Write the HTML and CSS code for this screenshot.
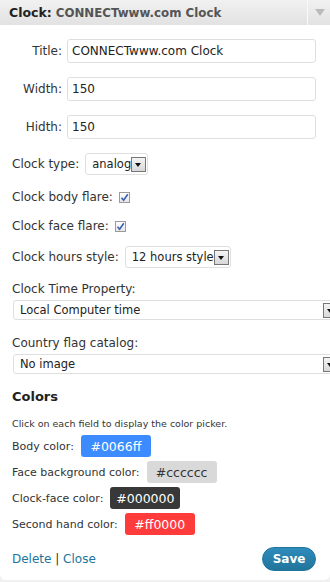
FILE: index.html
```html
<!DOCTYPE html>
<html>

<head>
    <title>Clock Widget</title>
    <meta name="viewport" content="width=device-width, initial-scale=1">
    <link rel="stylesheet" href="styles.css">
</head>

<body>
    <div class="widget">
        <div class="widget-top">
            <div class="widget-title"><b>Clock:</b> <span class="in-title">CONNECTwww.com Clock</span></div>
            <div class="widget-toggle"><span class="toggle-arrow"></span></div>
        </div>

        <div class="widget-inside">
            <div class="field-row">
                <label class="side-label">Title:</label>
                <input class="text-input" type="text" value="CONNECTwww.com Clock">
            </div>
            <div class="field-row">
                <label class="side-label">Width:</label>
                <input class="text-input" type="text" value="150">
            </div>
            <div class="field-row">
                <label class="side-label">Hidth:</label>
                <input class="text-input" type="text" value="150">
            </div>

            <div class="opt-row row-type">
                <span>Clock type:</span>
                <span class="fake-select small-select"><span class="sel-text">analog</span><span class="sel-arrow"></span></span>
            </div>
            <div class="opt-row row-body">
                <span>Clock body flare:</span>
                <span class="check"><svg width="9" height="9" viewBox="0 0 9 9"><path d="M1.5 4.8 L3.6 7.2 L7.8 1.2" fill="none" stroke="#3a5fb0" stroke-width="1.6"/></svg></span>
            </div>
            <div class="opt-row row-face">
                <span>Clock face flare:</span>
                <span class="check"><svg width="9" height="9" viewBox="0 0 9 9"><path d="M1.5 4.8 L3.6 7.2 L7.8 1.2" fill="none" stroke="#3a5fb0" stroke-width="1.6"/></svg></span>
            </div>
            <div class="opt-row row-hours">
                <span>Clock hours style:</span>
                <span class="fake-select small-select"><span class="sel-text">12 hours style</span><span class="sel-arrow"></span></span>
            </div>

            <div class="block-label label-time">Clock Time Property:</div>
            <div class="fake-select wide-select"><span class="sel-text">Local Computer time</span><span class="sel-arrow"></span></div>

            <div class="block-label label-flag">Country flag catalog:</div>
            <div class="fake-select wide-select"><span class="sel-text">No image</span><span class="sel-arrow"></span></div>

            <h3 class="colors-title">Colors</h3>
            <p class="colors-note">Click on each field to display the color picker.</p>

            <div class="color-row">
                <span>Body color:</span>
                <span class="swatch swatch-blue">#0066ff</span>
            </div>
            <div class="color-row">
                <span>Face background color:</span>
                <span class="swatch swatch-grey">#cccccc</span>
            </div>
            <div class="color-row">
                <span>Clock-face color:</span>
                <span class="swatch swatch-black">#000000</span>
            </div>
            <div class="color-row">
                <span>Second hand color:</span>
                <span class="swatch swatch-red">#ff0000</span>
            </div>

            <div class="widget-control">
                <div class="control-links"><a href="#">Delete</a> | <a href="#">Close</a></div>
                <button class="save-btn" type="button">Save</button>
            </div>
        </div>
    </div>
</body>

</html>
```

FILE: styles.css
```css
body {
    margin: 0;
    padding: 0;
    background: #f1f1f1;
    font-family: "DejaVu Sans", Verdana, sans-serif;
    font-size: 12px;
    color: #333;
    overflow: hidden;
}

.widget {
    width: 330px;
    height: 580px;
    background: #fff;
    border-radius: 0 0 6px 6px;
    overflow: visible;
}

/* header bar */
.widget-top {
    height: 25px;
    display: flex;
    align-items: center;
    background: linear-gradient(to bottom, #f1f1f1, #e2e2e2);
}

.widget-title {
    flex: 1;
    padding-left: 9px;
    font-size: 12.5px;
    color: #222;
    white-space: nowrap;
}

.widget-title b {
    font-weight: bold;
}

.in-title {
    font-size: 11.8px;
    font-weight: bold;
    color: #555;
}

.widget-toggle {
    width: 22px;
    height: 25px;
    border-left: 1px solid #f9f9f9;
    display: flex;
    justify-content: center;
    align-items: center;
}

.toggle-arrow {
    width: 0;
    height: 0;
    border-left: 5px solid transparent;
    border-right: 5px solid transparent;
    border-top: 7px solid #bbb;
    margin-left: 2px;
}

.widget-inside {
    padding: 0 14px 0 12px;
}

/* title / width / height */
.field-row {
    display: flex;
    align-items: center;
    gap: 5px;
    margin-top: 14px;
}

.side-label {
    width: 50px;
    text-align: right;
    color: #333;
}

.text-input {
    flex: 1;
    height: 24px;
    box-sizing: border-box;
    border: 1px solid #dfdfdf;
    border-radius: 3px;
    padding: 0 4px;
    font-family: "DejaVu Sans", Verdana, sans-serif;
    font-size: 12px;
    color: #222;
    background: #fff;
}

/* option rows */
.opt-row {
    display: flex;
    align-items: center;
    gap: 6px;
    height: 22px;
}

.row-type {
    margin-top: 14px;
}

.row-body {
    margin-top: 11px;
}

.row-face {
    margin-top: 7px;
}

.row-hours {
    margin-top: 9px;
}

.fake-select {
    display: inline-flex;
    align-items: center;
    box-sizing: border-box;
    border: 1px solid #dfdfdf;
    border-radius: 3px;
    background: #fff;
    color: #222;
    font-size: 11.5px;
    white-space: nowrap;
}

.small-select {
    height: 22px;
    padding-left: 6px;
    padding-right: 1px;
}

.sel-arrow {
    width: 15px;
    height: 15px;
    box-sizing: border-box;
    border: 1px solid #777;
    background: linear-gradient(to bottom, #f4f4f4, #d8d8d8);
    position: relative;
}

.sel-arrow::after {
    content: "";
    position: absolute;
    left: 3px;
    top: 5px;
    border-left: 3.5px solid transparent;
    border-right: 3.5px solid transparent;
    border-top: 4px solid #111;
}

.check {
    width: 11px;
    height: 11px;
    box-sizing: border-box;
    border: 1px solid #9a9a9a;
    background: linear-gradient(to bottom, #fff, #e6e6e6);
    display: inline-flex;
    justify-content: center;
    align-items: center;
}

.block-label {
    line-height: 16px;
}

.label-time {
    margin-top: 13px;
}

.label-flag {
    margin-top: 15px;
}

.wide-select {
    display: flex;
    justify-content: space-between;
    width: 328px;
    height: 20px;
    margin-top: 3px;
    margin-left: 1px;
    padding-left: 6px;
    padding-right: 2px;
}

.colors-title {
    margin: 14px 0 0;
    font-size: 13px;
    font-weight: bold;
    color: #222;
    line-height: 18px;
}

.colors-note {
    margin: 11px 0 0;
    font-size: 9.5px;
    color: #333;
    line-height: 14px;
}

.color-row {
    display: flex;
    align-items: center;
    gap: 7px;
    height: 22px;
    margin-top: 4px;
    font-size: 11px;
}

.swatch {
    width: 70px;
    height: 22px;
    border-radius: 3px;
    display: inline-flex;
    justify-content: center;
    align-items: center;
    font-size: 12.5px;
    color: #fff;
}

.swatch-blue {
    background: #3d8cff;
}

.swatch-grey {
    background: #d9d9d9;
    color: #333;
}

.swatch-black {
    background: #383838;
}

.swatch-red {
    background: #ff3b3b;
}

/* bottom controls */
.widget-control {
    display: flex;
    justify-content: space-between;
    align-items: center;
    margin-top: 12px;
}

.control-links {
    color: #333;
}

.control-links a {
    color: #21759b;
    text-decoration: none;
}

.save-btn {
    width: 54px;
    height: 24px;
    border: 1px solid #21759b;
    border-radius: 12px;
    background: linear-gradient(to bottom, #2e8bbc, #21759b);
    color: #fff;
    font-family: "DejaVu Sans", Verdana, sans-serif;
    font-size: 12px;
    font-weight: bold;
    cursor: pointer;
}
```
